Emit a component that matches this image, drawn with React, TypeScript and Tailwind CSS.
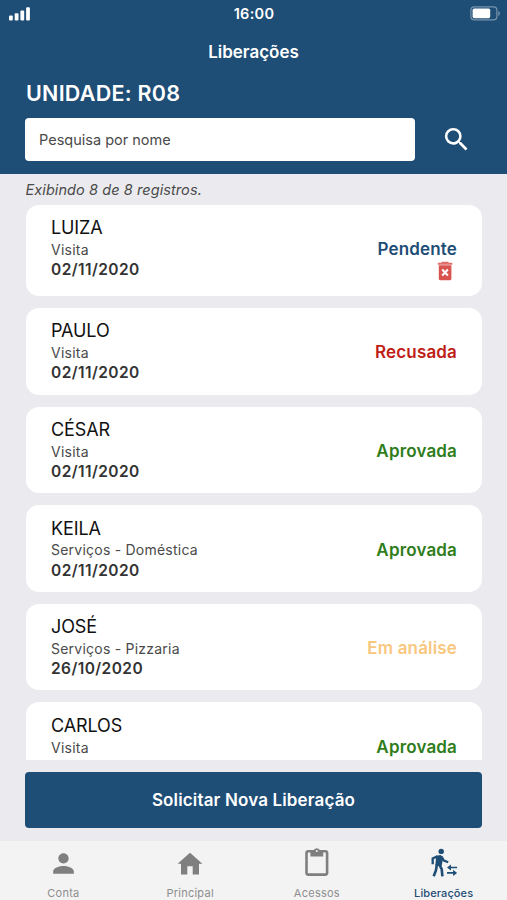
import { useState } from "react";
import { MdPerson, MdSearch } from "react-icons/md";

type Status = "Pendente" | "Recusada" | "Aprovada" | "Em análise";

interface Release {
  name: string;
  kind: string;
  date?: string;
  status: Status;
}

const RELEASES: Release[] = [
  { name: "LUIZA", kind: "Visita", date: "02/11/2020", status: "Pendente" },
  { name: "PAULO", kind: "Visita", date: "02/11/2020", status: "Recusada" },
  { name: "CÉSAR", kind: "Visita", date: "02/11/2020", status: "Aprovada" },
  { name: "KEILA", kind: "Serviços - Doméstica", date: "02/11/2020", status: "Aprovada" },
  { name: "JOSÉ", kind: "Serviços - Pizzaria", date: "26/10/2020", status: "Em análise" },
  { name: "CARLOS", kind: "Visita", status: "Aprovada" },
];

const STATUS_COLOR: Record<Status, string> = {
  Pendente: "text-[#1e4d76]",
  Recusada: "text-[#bf1e17]",
  Aprovada: "text-[#2f7d1b]",
  "Em análise": "text-[#f8c77d]",
};

function StatusBar() {
  return (
    <div className="flex h-[27px] items-center justify-between pl-[9px] pr-[6px]">
      <svg width="22" height="14" viewBox="0 0 22 14" fill="currentColor">
        <rect x="0" y="8.5" width="3.8" height="5" rx="1" />
        <rect x="5.7" y="6.2" width="3.8" height="7.3" rx="1" />
        <rect x="11.4" y="3.4" width="3.8" height="10.1" rx="1" />
        <rect x="17.1" y="0.3" width="3.8" height="13.2" rx="1" />
      </svg>
      <span className="pl-[7px] text-[14.5px] font-semibold tracking-[0.3px]">16:00</span>
      <svg width="31" height="15" viewBox="0 0 31 15" fill="none">
        <rect x="0.9" y="0.9" width="26" height="13" rx="3.4" stroke="#fff" strokeOpacity="0.4" strokeWidth="1.2" />
        <rect x="2.6" y="2.6" width="17.6" height="9.6" rx="1.6" fill="#fff" />
        <path d="M28.4 5.2c1.8.5 1.8 4.1 0 4.6z" fill="#fff" fillOpacity="0.45" />
      </svg>
    </div>
  );
}

function TrashIcon() {
  return (
    <svg width="16" height="20" viewBox="0 0 16 20" className="mr-[4.5px]">
      <path d="M1.8 4.2h12.6v13.2a1.9 1.9 0 0 1-1.9 1.9H3.7a1.9 1.9 0 0 1-1.9-1.9z" fill="#d9534f" />
      <path d="M5 0.8h6l0.9 0.9h3.4v2.1H0.8V1.7h3.4z" fill="#e06f6b" />
      <path d="M5.2 8.6l5.7 5.9M10.9 8.6l-5.7 5.9" stroke="#fff" strokeWidth="2.1" />
    </svg>
  );
}

function ReleaseCard({ release }: { release: Release }) {
  const pending = release.status === "Pendente";
  return (
    <div
      className={`flex shrink-0 justify-between rounded-[13px] bg-white px-[25px] pt-[11px] ${pending ? "h-[91px]" : "h-[86.6px]"}`}
    >
      <div className="whitespace-nowrap">
        <div className="h-[24px] pt-[0.4px] text-[18px] leading-[24px] tracking-[-0.1px] text-[#111]">{release.name}</div>
        <div className="h-[19px] pt-[0.3px] text-[14px] leading-[19px] tracking-[0.23px] text-[#4a4a4a]">{release.kind}</div>
        {release.date && (
          <div className="h-[21px] pt-[0.4px] text-[15.5px] font-semibold leading-[21px] tracking-[0.42px] text-[#333]">
            {release.date}
          </div>
        )}
      </div>
      <div className="flex flex-col items-end pt-[21.4px]">
        <div
          className={`h-[24px] text-[17px] font-semibold leading-[24px] tracking-[0.16px] ${STATUS_COLOR[release.status]}`}
        >
          {release.status}
        </div>
        {pending && <TrashIcon />}
      </div>
    </div>
  );
}

function HomeIcon() {
  return (
    <svg width="26" height="24" viewBox="0 0 26 24" fill="currentColor">
      <path d="M10.3 22.5v-8.2h5.4v8.2h6.3V11.7h3.4L13 0.8 0.6 11.7H4v10.8z" />
    </svg>
  );
}

function ClipboardIcon() {
  return (
    <svg width="26" height="30" viewBox="0 0 26 30" className="-mt-[3px] ml-px">
      <rect x="2.5" y="4.2" width="20.6" height="23.4" rx="1.8" fill="none" stroke="currentColor" strokeWidth="2.6" />
      <path d="M6.4 4h3a3.5 3.5 0 0 1 6.8 0h3v5.6H6.4z" fill="currentColor" />
      <circle cx="12.8" cy="3.9" r="1" fill="#f3f3f3" />
    </svg>
  );
}

// walking person with the two exchange arrows
function TransferIcon() {
  return (
    <svg width="28" height="30" viewBox="0 0 28 30" fill="none" stroke="currentColor" className="-mt-px">
      <circle cx="11.2" cy="3.4" r="2.7" fill="currentColor" stroke="none" />
      <path d="M6.1 7.8 10.6 6.9 13.2 9.4 11.6 18.2 5.4 17.6z" fill="currentColor" stroke="none" />
      <path d="M7.4 8.3 2.7 10.4v5.8" strokeWidth="2.3" />
      <path d="M11.2 8.3 13.9 12.6 18.2 14.3" strokeWidth="2.3" />
      <path d="M6.9 16.2 6 22.2 3.7 28.3" strokeWidth="2.6" />
      <path d="M9.4 16.8 11.7 21.2 12.4 28.3" strokeWidth="2.6" />
      <path d="M19.5 19.5h7.6M17 24.9h7.6" strokeWidth="1.7" />
      <path d="M17 19.5l4-3.1v6.2zM27.1 24.9l-4-3.1v6.2z" fill="currentColor" stroke="none" />
    </svg>
  );
}

const TABS = [
  { label: "Conta", icon: <MdPerson className="size-[31px]" /> },
  { label: "Principal", icon: <HomeIcon /> },
  { label: "Acessos", icon: <ClipboardIcon /> },
  { label: "Liberações", icon: <TransferIcon /> },
];

export default function App() {
  const [query, setQuery] = useState("");
  const [active, setActive] = useState("Liberações");

  return (
    <div className="flex h-[900px] w-[507px] flex-col overflow-hidden bg-[#ebebef] font-['Inter',sans-serif]">
      <header className="h-[174px] shrink-0 bg-[#1e4d76] text-white">
        <StatusBar />
        <h1 className="mt-[13px] text-center text-[17px] font-semibold leading-[24px]">Liberações</h1>
        <h2 className="mt-[14px] pl-[26px] text-[21.5px] font-semibold leading-[30px] tracking-[0.25px]">UNIDADE: R08</h2>
        <div className="mt-[10px] flex items-center pl-[25px]">
          <input
            value={query}
            onChange={(e) => setQuery(e.target.value)}
            placeholder="Pesquisa por nome"
            className="h-[43px] w-[390px] rounded-[4px] bg-white px-[14px] text-[14.5px] text-[#333] outline-none placeholder:text-[#4a4a4a]"
          />
          <button type="button" aria-label="Pesquisar" className="ml-[26px]">
            <MdSearch className="size-[31px]" />
          </button>
        </div>
      </header>

      <p className="h-[31px] shrink-0 pl-[25.5px] text-[14.5px] italic leading-[31px] tracking-[0.08px] text-[#4a4a4a]">
        Exibindo 8 de 8 registros.
      </p>

      <main className="flex h-[554.5px] shrink-0 flex-col gap-[12px] overflow-hidden pl-[26px] pr-[25px]">
        {RELEASES.map((r) => (
          <ReleaseCard key={r.name} release={r} />
        ))}
      </main>

      <button
        type="button"
        className="mx-[25px] mt-[12px] h-[56.5px] shrink-0 rounded-[4px] bg-[#1e4d76] pt-px text-[17px] font-semibold tracking-[0.15px] text-white"
      >
        Solicitar Nova Liberação
      </button>

      <nav className="mt-[13px] grid flex-1 grid-cols-4 bg-[#f3f3f3]">
        {TABS.map((tab) => (
          <button
            key={tab.label}
            type="button"
            onClick={() => setActive(tab.label)}
            className={`flex flex-col items-center ${tab.label === active ? "text-[#1e4d76]" : "text-[#7f7f7f]"}`}
          >
            <span className="flex h-[45px] items-center justify-center">{tab.icon}</span>
            <span
              className={`text-[11px] leading-[14px] ${tab.label === active ? "font-medium tracking-[0.1px]" : "tracking-[0.25px] text-[#8e8e8e]"}`}
            >
              {tab.label}
            </span>
          </button>
        ))}
      </nav>
    </div>
  );
}
